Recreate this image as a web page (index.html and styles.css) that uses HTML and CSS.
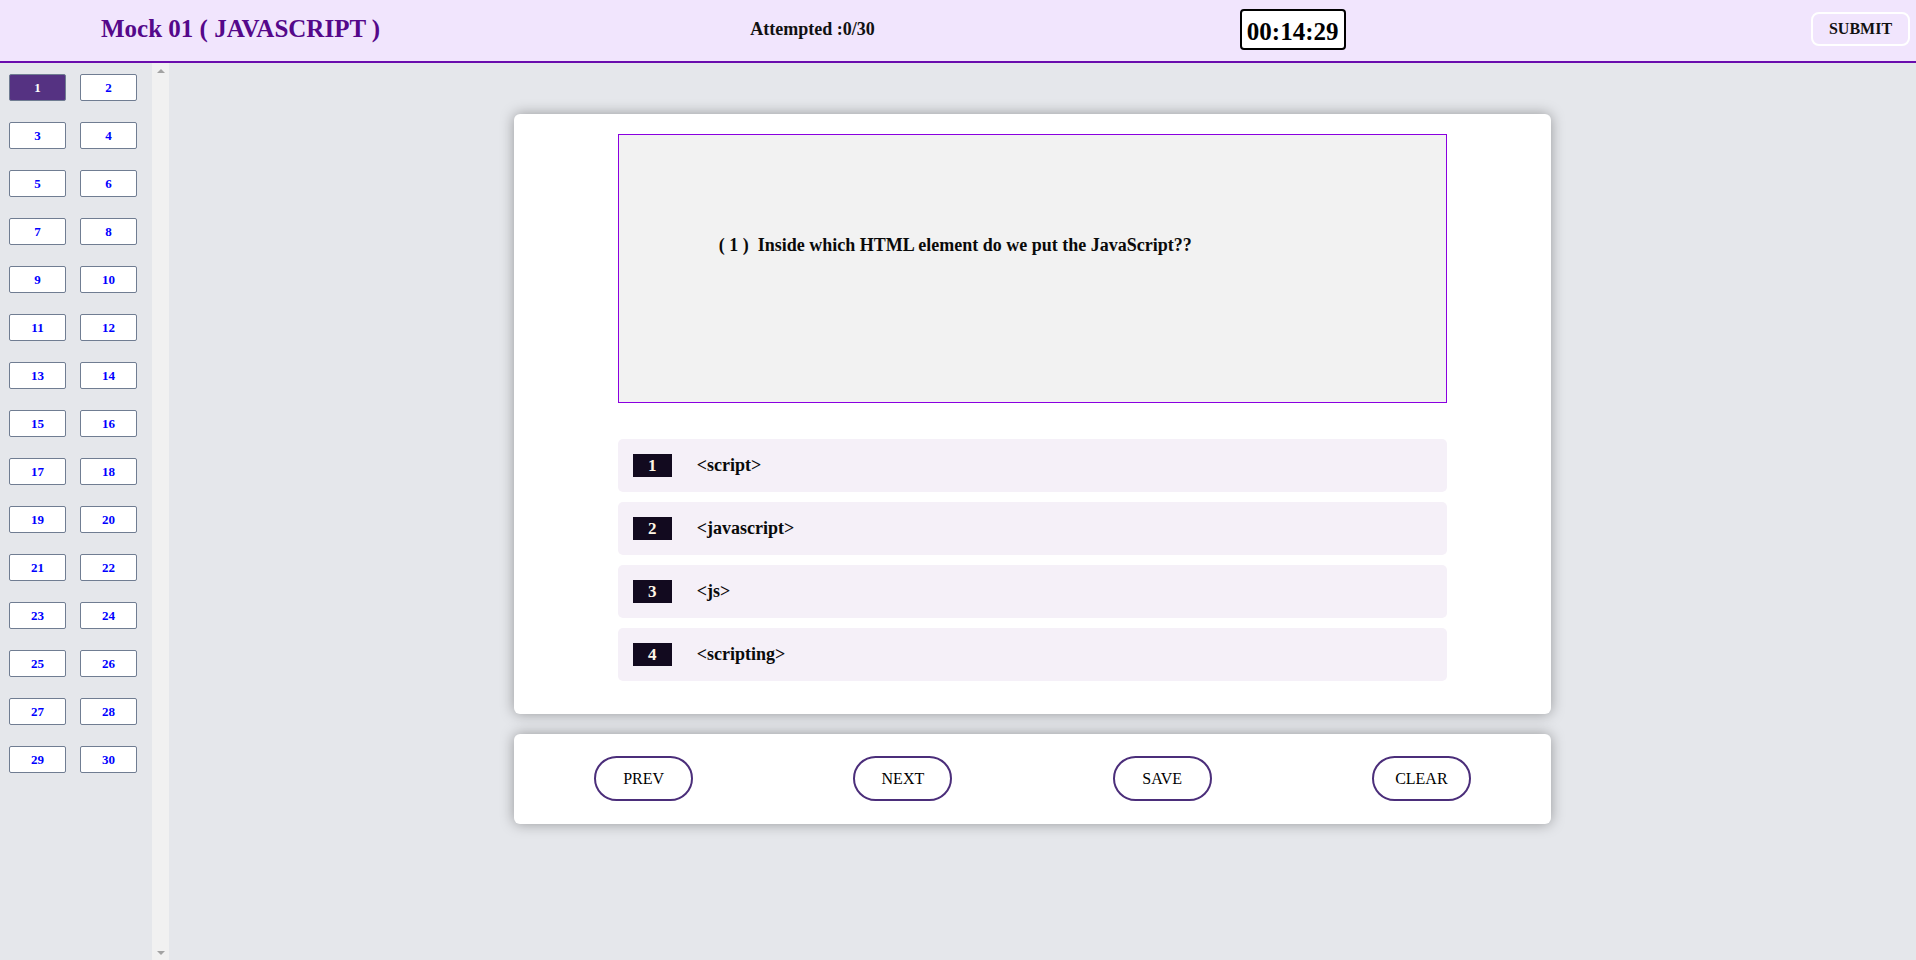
FILE: index.html
```html
<!DOCTYPE html>
<html lang="en">
<head>
<meta charset="utf-8">
<title>Mock 01 ( JAVASCRIPT )</title>
<link rel="stylesheet" href="styles.css">
</head>
<body>
<header class="topbar">
  <h1 class="title">Mock 01 ( JAVASCRIPT )</h1>
  <div class="attempted">Attempted :0/30</div>
  <div class="timer">00:14:29</div>
  <button class="submit">SUBMIT</button>
</header>
<div class="layout">
  <aside class="sidebar">
    <div class="qgrid">
      <button class="qbtn active">1</button><button class="qbtn">2</button>
      <button class="qbtn">3</button><button class="qbtn">4</button>
      <button class="qbtn">5</button><button class="qbtn">6</button>
      <button class="qbtn">7</button><button class="qbtn">8</button>
      <button class="qbtn">9</button><button class="qbtn">10</button>
      <button class="qbtn">11</button><button class="qbtn">12</button>
      <button class="qbtn">13</button><button class="qbtn">14</button>
      <button class="qbtn">15</button><button class="qbtn">16</button>
      <button class="qbtn">17</button><button class="qbtn">18</button>
      <button class="qbtn">19</button><button class="qbtn">20</button>
      <button class="qbtn">21</button><button class="qbtn">22</button>
      <button class="qbtn">23</button><button class="qbtn">24</button>
      <button class="qbtn">25</button><button class="qbtn">26</button>
      <button class="qbtn">27</button><button class="qbtn">28</button>
      <button class="qbtn">29</button><button class="qbtn">30</button>
    </div>
    <div class="scrollbar">
      <span class="arrow up"></span>
      <span class="arrow down"></span>
    </div>
  </aside>
  <main class="main">
    <section class="card question-card">
      <div class="question">( 1 )&nbsp; Inside which HTML element do we put the JavaScript??</div>
      <ul class="options">
        <li class="option"><span class="badge">1</span><span class="opt-text">&lt;script&gt;</span></li>
        <li class="option"><span class="badge">2</span><span class="opt-text">&lt;javascript&gt;</span></li>
        <li class="option"><span class="badge">3</span><span class="opt-text">&lt;js&gt;</span></li>
        <li class="option"><span class="badge">4</span><span class="opt-text">&lt;scripting&gt;</span></li>
      </ul>
    </section>
    <section class="card nav-card">
      <button class="nav-btn">PREV</button>
      <button class="nav-btn">NEXT</button>
      <button class="nav-btn">SAVE</button>
      <button class="nav-btn">CLEAR</button>
    </section>
  </main>
</div>
</body>
</html>
```
FILE: styles.css
```css
* { box-sizing: border-box; }

html, body {
  margin: 0;
  height: 100%;
}

body {
  font-family: "Liberation Serif", "Times New Roman", serif;
  background: #e5e7eb;
  color: #000;
  overflow: hidden;
}

button {
  font-family: inherit;
  cursor: pointer;
}

/* ---------- top bar ---------- */
.topbar {
  height: 63px;
  background: #f1e5fd;
  border-bottom: 2px solid #6a0dad;
  display: flex;
  align-items: center;
  padding: 0 6px 3px 101px;
}

.title {
  margin: 0;
  font-size: 25px;
  font-weight: bold;
  color: #55088a;
}

.attempted {
  margin-left: 370px;
  font-size: 18px;
  font-weight: bold;
  color: #111;
}

.timer {
  margin-left: 365px;
  width: 106px;
  height: 41px;
  border: 2px solid #000;
  border-radius: 4px;
  background: #fff;
  font-size: 25px;
  font-weight: bold;
  text-align: center;
  padding-top: 7px;
  line-height: normal;
  overflow: visible;
}

.submit {
  margin-left: auto;
  height: 34px;
  width: 99px;
  border: 2px solid #fff;
  border-radius: 8px;
  background: transparent;
  font-size: 16px;
  font-weight: bold;
  color: #111;
  padding: 0;
}

/* ---------- layout ---------- */
.layout {
  display: flex;
  height: calc(100vh - 63px);
}

.sidebar {
  width: 169px;
  flex: none;
  display: flex;
  background: #e5e7eb;
}

.qgrid {
  flex: 1;
  display: grid;
  grid-template-columns: 57px 57px;
  grid-auto-rows: 27px;
  column-gap: 14px;
  row-gap: 21px;
  align-content: start;
  padding: 11px 0 0 9px;
}

.qbtn {
  border: 1px solid #707d92;
  border-radius: 2px;
  background: #fff;
  color: #0000ff;
  font-size: 13px;
  font-weight: bold;
  padding: 0;
}

.qbtn.active {
  background: #553282;
  color: #fff;
}

.scrollbar {
  width: 17px;
  flex: none;
  background: #f1f1f1;
  display: flex;
  flex-direction: column;
  justify-content: space-between;
  align-items: center;
  padding: 6px 0 5px;
}

.arrow {
  width: 0;
  height: 0;
  border-left: 4px solid transparent;
  border-right: 4px solid transparent;
}

.arrow.up { border-bottom: 4px solid #a3a3a3; }
.arrow.down { border-top: 4px solid #a3a3a3; }

/* ---------- main ---------- */
.main {
  flex: 1;
  display: flex;
  flex-direction: column;
  align-items: center;
  padding: 51px 20px 0 0;
}

.card {
  width: 1037px;
  background: #fff;
  border-radius: 6px;
  box-shadow: 0 0 14px rgba(0, 0, 0, 0.35);
}

.question-card {
  padding: 20px 0 33px;
}

.question {
  width: 80%;
  height: 269px;
  margin: 0 auto;
  background: #f2f2f2;
  border: 1px solid #8a00e0;
  padding: 100px 100px;
  font-size: 18px;
  font-weight: bold;
  color: #0a0a0a;
}

.options {
  list-style: none;
  width: 80%;
  margin: 36px auto 0;
  padding: 0;
  display: flex;
  flex-direction: column;
  gap: 10px;
}

.option {
  height: 53px;
  background: #f5f0f8;
  border-radius: 5px;
  display: flex;
  align-items: center;
  gap: 25px;
  padding: 0 15px;
}

.badge {
  width: 39px;
  height: 23px;
  background: #120a1f;
  color: #fff6e6;
  font-size: 17px;
  font-weight: bold;
  line-height: 23px;
  text-align: center;
}

.opt-text {
  font-size: 18px;
  font-weight: bold;
  color: #0a0a0a;
}

.nav-card {
  margin-top: 20px;
  height: 90px;
  display: flex;
  align-items: center;
  justify-content: space-around;
  padding-bottom: 1px;
}

.nav-btn {
  width: 99px;
  height: 45px;
  border: 2px solid #4b2e7a;
  border-radius: 23px;
  background: #fff;
  font-size: 16px;
  color: #000;
  padding: 0;
}
```
